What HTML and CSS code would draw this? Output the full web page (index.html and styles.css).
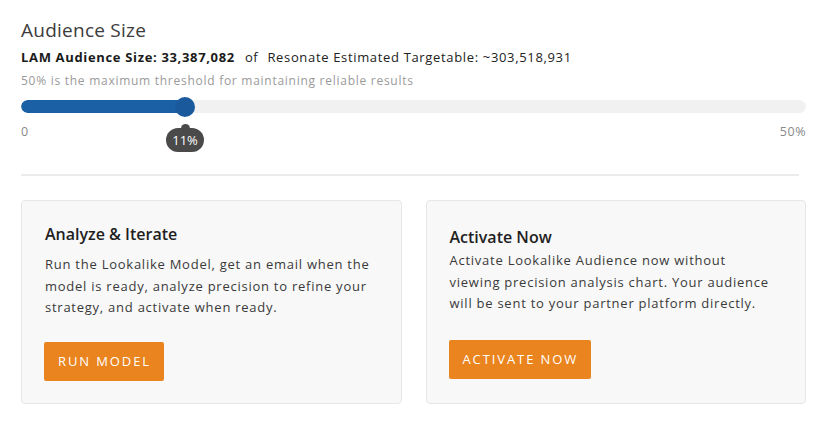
FILE: index.html
```html
<!DOCTYPE html>
<html lang="en">
<head>
<meta charset="utf-8">
<title>Audience Size</title>
<link rel="stylesheet" href="styles.css">
</head>
<body>
<main class="page">
  <h1 class="title">Audience Size</h1>
  <p class="summary"><strong>LAM Audience Size: 33,387,082</strong><span class="of">of</span>Resonate Estimated Targetable: ~303,518,931</p>
  <p class="note">50% is the maximum threshold for maintaining reliable results</p>

  <div class="slider">
    <div class="track"><div class="fill" style="width: 20.9%"></div></div>
    <div class="thumb" style="left: 20.9%"></div>
    <div class="tip" style="left: 20.9%">11%</div>
  </div>
  <div class="scale"><span>0</span><span>50%</span></div>

  <hr class="divider">

  <section class="cards">
    <div class="card card-analyze">
      <h2 class="card-title">Analyze &amp; Iterate</h2>
      <p class="card-text">Run the Lookalike Model, get an email when the model is ready, analyze precision to refine your strategy, and activate when ready.</p>
      <button class="btn">RUN MODEL</button>
    </div>
    <div class="card card-activate">
      <h2 class="card-title">Activate Now</h2>
      <p class="card-text">Activate Lookalike Audience now without viewing precision analysis chart. Your audience will be sent to your partner platform directly.</p>
      <button class="btn">ACTIVATE NOW</button>
    </div>
  </section>
</main>
</body>
</html>
```

FILE: styles.css
```css
* { box-sizing: border-box; }
html, body { margin: 0; padding: 0; background: #fff; }
body {
  font-family: "Open Sans", "Noto Sans", "Liberation Sans", sans-serif;
  color: #333;
}
.page {
  padding: 17px 25px 0 21px;
}
.title {
  margin: 0;
  font-size: 19px;
  line-height: 26px;
  font-weight: 400;
  letter-spacing: 0.25px;
  color: #3c3c3c;
}
.summary {
  margin: 4px 0 0;
  font-size: 13px;
  line-height: 20px;
  letter-spacing: 0.66px;
  color: #222;
}
.summary strong { font-weight: 700; color: #1a1a1a; }
.summary .of { margin: 0 9px 0 10px; }
.note {
  margin: 6px 0 0;
  font-size: 12px;
  line-height: 16px;
  letter-spacing: 0.73px;
  color: #9a9a9a;
}
.slider {
  position: relative;
  margin-top: 11px;
  height: 13px;
}
.track {
  height: 13px;
  background: #f1f1f1;
  border-radius: 7px;
  overflow: hidden;
}
.fill {
  height: 100%;
  background: #1b60a5;
  border-radius: 7px 0 0 7px;
}
.thumb {
  position: absolute;
  top: -3px;
  width: 20px;
  height: 20px;
  margin-left: -10px;
  border-radius: 50%;
  background: #1a5a9c;
}
.tip {
  position: absolute;
  top: 28px;
  width: 38px;
  height: 24px;
  margin-left: -19px;
  border-radius: 12px;
  background: #4a4a4a;
  color: #fff;
  font-size: 13px;
  line-height: 24px;
  text-align: center;
}
.tip::before {
  content: "";
  position: absolute;
  left: 50%;
  top: -4px;
  width: 9px;
  height: 9px;
  margin-left: -4.5px;
  background: #4a4a4a;
  border-radius: 50% 50% 0 0;
}
.scale {
  display: flex;
  justify-content: space-between;
  margin-top: 11px;
  font-size: 12.5px;
  line-height: 16px;
  letter-spacing: 0.5px;
  color: #888;
}
.divider {
  margin: 34px 7px 0 0;
  border: 0;
  height: 2px;
  background: #ececec;
}
.cards {
  display: grid;
  grid-template-columns: 1fr 1fr;
  gap: 24px;
  margin-top: 24px;
}
.card {
  height: 204px;
  background: #f8f8f8;
  border: 1px solid #e7e7e7;
  border-radius: 4px;
  padding: 0 30px 0 23px;
}
.card-title {
  margin: 0;
  font-size: 16px;
  line-height: 20px;
  font-weight: 600;
  letter-spacing: 0;
  color: #1f1f1f;
}
.card-text {
  margin: 0;
  font-size: 13px;
  line-height: 21.5px;
  letter-spacing: 0.75px;
  color: #3a3a3a;
}
.card-analyze { padding-top: 23px; }
.card-analyze .card-text { margin-top: 10px; }
.card-analyze .btn { margin-top: 23px; }
.card-activate { padding-top: 26px; }
.card-activate .card-text { margin-top: 3px; }
.card-activate .btn { margin-top: 25px; }
.btn {
  display: block;
  height: 39px;
  padding: 0 13px 0 14px;
  margin-left: -1px;
  border: 0;
  border-radius: 2px;
  background: #e9841e;
  color: #fff;
  font-family: inherit;
  font-size: 13px;
  letter-spacing: 1.9px;
}
```
